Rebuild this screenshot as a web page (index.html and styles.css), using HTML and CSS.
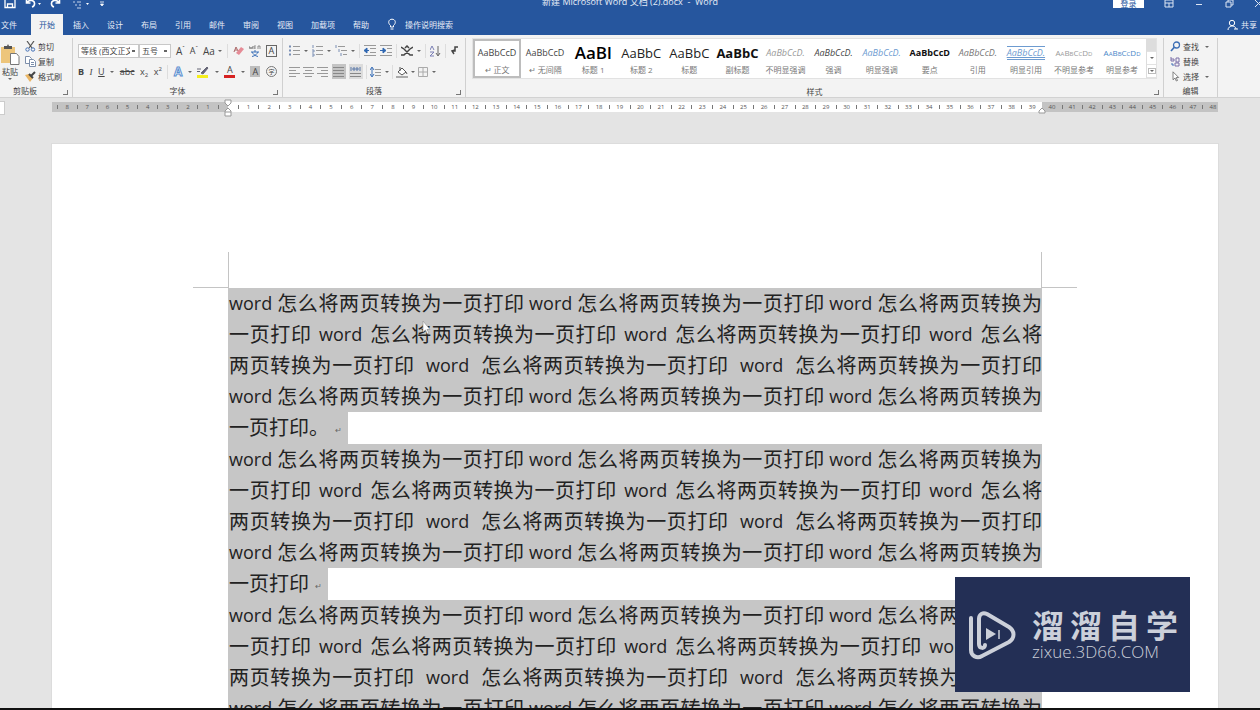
FILE: index.html
```html
<!DOCTYPE html>
<html lang="zh-CN">
<head>
<meta charset="utf-8">
<title>新建 Microsoft Word 文档 (2).docx - Word</title>
<link rel="stylesheet" href="styles.css">
</head>
<body>
<header class="top">
  <div class="titlebar">
    <div class="quick">
      <button aria-label="保存"><svg width="12" height="12" viewBox="0 0 12 12"><path d="M1 1h8l2 2v7.500H1z M3.500 10.500V7h5v3.500" fill="none" stroke="#fff" stroke-width="1.300"/></svg></button>
      <button aria-label="撤消"><svg width="16" height="12" viewBox="0 0 16 12"><path d="M1.500 2v4h4M2 6c2-4 8-3 7.500 1 0 1.500-1 2.500-2.500 3" fill="none" stroke="#fff" stroke-width="1.600"/><path d="M13 6h3l-1.500 2z" fill="#fff"/></svg></button>
      <button aria-label="恢复"><svg width="12" height="12" viewBox="0 0 12 12"><path d="M9.500 2v4h-4M9 6C7 2 1 3 1.500 7c0 1.500 1 2.500 2.500 3" fill="none" stroke="#fff" stroke-width="1.600"/></svg></button>
      <button aria-label="触摸模式"><svg width="18" height="12" viewBox="0 0 18 12"><path d="M2 5h2M6 5h4M4 8h2m2 0h2M6 11h4" stroke="#c4d2e9"/><path d="M15 6h3l-1.500 2z" fill="#fff"/></svg></button>
      <button aria-label="自定义快速访问工具栏"><svg width="8" height="12" viewBox="0 0 8 12"><path d="M2 5h4M2.500 7h3L4 9z" stroke="#fff" fill="#fff" stroke-width=".8"/></svg></button>
    </div>
    <div class="doc-name">新建 Microsoft Word 文档 (2).docx &nbsp;-&nbsp; Word</div>
    <div class="window">
      <button class="login">登录</button>
      <button aria-label="功能区显示选项"><svg width="10" height="10" viewBox="0 0 10 10"><path d="M1 1h8v7H1zM1 4h8M5 8V4" fill="none" stroke="#dce5f3"/></svg></button>
      <button aria-label="最小化"><svg width="10" height="10" viewBox="0 0 10 10"><path d="M2 5.500h6" stroke="#dce5f3"/></svg></button>
      <button aria-label="还原"><svg width="10" height="10" viewBox="0 0 10 10"><path d="M2 3h5v5H2zM4 3V1h5v5H7" fill="none" stroke="#dce5f3"/></svg></button>
      <button aria-label="关闭"><svg width="10" height="10" viewBox="0 0 10 10"><path d="M1 1l7 7M8 1L1 8" stroke="#dce5f3"/></svg></button>
    </div>
  </div>
  <nav class="tabs">
    <button class="file">文件</button><button class="on">开始</button><button>插入</button><button>设计</button><button>布局</button><button>引用</button><button>邮件</button><button>审阅</button><button>视图</button><button>加载项</button><button>帮助</button>
    <button class="tell"><svg width="10" height="13" viewBox="0 0 10 13"><path d="M3.500 9V7.500C.5 5 1.500 1.200 5 1.200S9.500 5 6.500 7.500V9zM3.500 11h3" fill="none" stroke="#fff"/></svg>操作说明搜索</button>
    <button class="share"><svg width="11" height="12" viewBox="0 0 11 12"><circle cx="5" cy="4" r="2.700" fill="none" stroke="#fff"/><path d="M1 11c0-5 8-5 8-1M7 10h4" fill="none" stroke="#fff"/></svg>共享</button>
  </nav>
</header>

<section class="ribbon">
  <div class="group clip">
    <div class="tools clip-tools">
      <button class="paste"><svg width="20" height="22" viewBox="0 0 20 22"><path d="M1 3h14v16H1z" fill="#edc57b"/><path d="M4 2h3l1-2 1 2h3v3H4z" fill="#555"/><path d="M10.500 9.500h6l2.500 3v8h-8.500z" fill="#fff" stroke="#777"/></svg>粘贴<i class="caret"></i></button>
      <div class="stack">
        <button><svg width="11" height="11" viewBox="0 0 11 11"><path d="M2 0l5 7M9 0L4 7" stroke="#555" stroke-width="1.200"/><circle cx="2.500" cy="8.500" r="1.700" fill="none" stroke="#4472b8"/><circle cx="8" cy="8.500" r="1.700" fill="none" stroke="#4472b8"/></svg>剪切</button>
        <button><svg width="11" height="11" viewBox="0 0 11 11"><path d="M.5 .5h4l2 2v5h-6z" fill="#fff" stroke="#7c8eaa"/><path d="M4.500 3.500h4l2 2v5h-6zM6 6.500h3M6 8.500h3" fill="#fff" stroke="#7c8eaa"/></svg>复制</button>
        <button><svg width="11" height="11" viewBox="0 0 11 11"><path d="M0 4l4-1 4 4-3 4z" fill="#e9b564"/><path d="M4 3l4 4M6 5l4-4" fill="none" stroke="#444" stroke-width="2"/></svg>格式刷</button>
      </div>
    </div>
    <div class="label">剪贴板</div>
  </div>

  <div class="group font">
    <div class="tools">
      <div class="row">
        <div class="combos">
          <select class="family" aria-label="字体"><option>等线 (西文正文)</option></select>
          <select class="size" aria-label="字号"><option>五号</option></select>
        </div>
        <button class="big">A<sup>ˆ</sup></button><button>A<sup>ˇ</sup></button>
        <button class="big">Aa<i class="caret"></i></button><i class="bar"></i>
        <button aria-label="清除格式"><svg width="11" height="12" viewBox="0 0 11 12"><path d="M3 8l5-6 3 2-5 6z" fill="#e58b96"/><path d="M1 7l2-5 2 4M2 5h2" fill="none" stroke="#a66"/></svg></button>
        <button aria-label="拼音指南"><svg width="12" height="12" viewBox="0 0 12 12"><path d="M0 1l1 3 1-2 1 2 1-3M5 3h2M5 4V1h2M9 4V1h2v3" fill="none" stroke="#777" stroke-width=".8"/><path d="M2 7h8M6 5v2M3 7c1 2 3 4 6 4.500M9 7c-1 2-3 4-6 4.500" fill="none" stroke="#3b70b8"/></svg></button>
        <button class="boxed">A</button>
      </div>
      <div class="row">
        <button><b>B</b></button><button><em class="serif">I</em></button><button><u>U</u></button><i class="caret"></i><button><s>abc</s></button><button>x<sub>2</sub></button><button>x<sup>2</sup></button><i class="bar"></i>
        <button class="fx">A</button><i class="caret"></i>
        <button aria-label="突出显示"><svg width="12" height="12" viewBox="0 0 12 12"><path d="M0 3h4M0 5.500h3M4 7l6-6 1 1-5 6z" stroke="#667" fill="#667"/><path d="M0 9h11v3H0z" fill="#f5ee1c"/></svg></button><i class="caret"></i>
        <button class="red">A</button><i class="caret"></i>
        <button class="shade">A</button><button class="circled">字</button>
      </div>
    </div>
    <div class="label">字体</div>
  </div>

  <div class="group para">
    <div class="tools">
      <div class="row">
        <button aria-label="项目符号"><svg width="11" height="12" viewBox="0 0 11 12"><path d="M4 1.500h7M4 5.500h7M4 9.500h7" stroke="#999"/><path d="M0 1.500h2M0 5.500h2M0 9.500h2" stroke="#7a8fb5" stroke-width="2"/></svg></button><i class="caret"></i>
        <button aria-label="编号"><svg width="11" height="12" viewBox="0 0 11 12"><path d="M4 1.500h7M4 5.500h7M4 9.500h7" stroke="#999"/><path d="M1 0v3M0 5h2v2H0M0 9h2v2H0" fill="none" stroke="#7a8fb5"/></svg></button><i class="caret"></i>
        <button aria-label="多级列表"><svg width="12" height="12" viewBox="0 0 12 12"><path d="M3 1.500h7M6 5.500h6M8 9.500h4" stroke="#999"/><path d="M1 0v3M4 4v3M6 8v3" stroke="#7a8fb5"/></svg></button><i class="caret"></i><i class="bar"></i>
        <button aria-label="减少缩进"><svg width="12" height="12" viewBox="0 0 12 12"><path d="M0 .5h12M6 3.500h6M6 7.500h6M0 10.500h12" stroke="#999"/><path d="M5 5.500H1M3 3L0 5.500 3 8z" fill="#2f67b1" stroke="#2f67b1"/></svg></button>
        <button aria-label="增加缩进"><svg width="12" height="12" viewBox="0 0 12 12"><path d="M0 .5h12M7 3.500h5M7 7.500h5M0 10.500h12" stroke="#999"/><path d="M0 5.500h4M3 3l3 2.500L3 8z" fill="#2f67b1" stroke="#2f67b1"/></svg></button><i class="bar"></i>
        <button aria-label="中文版式"><svg width="12" height="12" viewBox="0 0 12 12"><path d="M0 2l3 2 6 6h3M12 2L9 4l-6 6H0M4 3l2-2 2 2" fill="none" stroke="#444" stroke-width="1.500"/></svg></button><i class="caret"></i><i class="bar"></i>
        <button aria-label="排序"><svg width="11" height="12" viewBox="0 0 11 12"><path d="M0 5l2-4 2 4M0 7h4l-4 4h4" fill="none" stroke="#7a7fb5"/><path d="M8 1v9M6 8l2 3 2-3" fill="none" stroke="#666"/></svg></button><i class="bar"></i>
        <button aria-label="显示编辑标记"><svg width="9" height="12" viewBox="0 0 9 12"><path d="M8 2H5v4H2M5 5l-3 1 2 3" fill="none" stroke="#444" stroke-width="1.500"/></svg></button>
      </div>
      <div class="row">
        <button aria-label="左对齐"><svg width="11" height="12" viewBox="0 0 11 12"><path d="M0 1.500h11M0 4.500h7M0 7.500h11M0 10.500h7" stroke="#999"/></svg></button>
        <button aria-label="居中"><svg width="11" height="12" viewBox="0 0 11 12"><path d="M0 1.500h11M2 4.500h7M0 7.500h11M2 10.500h7" stroke="#999"/></svg></button>
        <button aria-label="右对齐"><svg width="11" height="12" viewBox="0 0 11 12"><path d="M0 1.500h11M4 4.500h7M0 7.500h11M4 10.500h7" stroke="#999"/></svg></button>
        <button class="pressed" aria-label="两端对齐"><svg width="11" height="12" viewBox="0 0 11 12"><path d="M0 1.500h11M0 4.500h11M0 7.500h11M0 10.500h11" stroke="#888"/></svg></button>
        <button class="dist" aria-label="分散对齐"><svg width="11" height="12" viewBox="0 0 11 12"><path d="M0 7.500h11M0 10.500h11" stroke="#888"/><path d="M1 1v4M10 1v4M2 3h7M4 1v4M7 1v4" stroke="#5a78a8"/></svg></button><i class="bar"></i>
        <button aria-label="行距"><svg width="11" height="12" viewBox="0 0 11 12"><path d="M5 3.500h6M5 6.500h6M5 9.500h6" stroke="#999"/><path d="M2 2v8M0 4l2-3 2 3M0 8l2 3 2-3" fill="none" stroke="#3b70b8"/></svg></button><i class="caret"></i><i class="bar"></i>
        <button aria-label="底纹"><svg width="12" height="12" viewBox="0 0 12 12"><path d="M2 6l4-4 4 4-4 3zM4 1v4M10 6l1 2" fill="#fff" stroke="#555"/><path d="M0 11h12" stroke="#aaa" stroke-width="2"/></svg></button><i class="caret"></i>
        <button aria-label="边框"><svg width="10" height="12" viewBox="0 0 10 12"><path d="M.5 1.500h9v9h-9zM5 1v10M0 6h10" fill="none" stroke="#aaa"/></svg></button><i class="caret"></i><span class="rest"></span>
      </div>
    </div>
    <div class="label">段落</div>
  </div>

  <div class="group styles">
    <div class="tools gallery">
      <button class="style picked"><span class="s0">AaBbCcD</span>↵ 正文</button>
      <button class="style"><span class="s0">AaBbCcD</span>↵ 无间隔</button>
      <button class="style"><span class="h1">AaBl</span>标题 1</button>
      <button class="style"><span class="h2">AaBbC</span>标题 2</button>
      <button class="style"><span class="h2">AaBbC</span>标题</button>
      <button class="style"><span class="h2 bold">AaBbC</span>副标题</button>
      <button class="style"><span class="s0 it soft">AaBbCcD.</span>不明显强调</button>
      <button class="style"><span class="s0 it">AaBbCcD.</span>强调</button>
      <button class="style"><span class="s0 it blue">AaBbCcD.</span>明显强调</button>
      <button class="style"><span class="s0 bold">AaBbCcD</span>要点</button>
      <button class="style"><span class="s0 it mid">AaBbCcD.</span>引用</button>
      <button class="style"><span class="s0 it blue lined">AaBbCcD.</span>明显引用</button>
      <button class="style"><span class="s0 caps soft">AaBbCcDd</span>不明显参考</button>
      <button class="style"><span class="s0 caps ref">AaBbCcDd</span>明显参考</button>
      <div class="scroll"><button class="off" aria-label="上一行"></button><button aria-label="下一行"><i class="caret"></i></button><button aria-label="其他"><i class="caret more"></i></button></div>
    </div>
    <div class="label">样式</div>
  </div>

  <div class="group edit">
    <div class="tools stack">
      <button><svg width="11" height="11" viewBox="0 0 11 11"><circle cx="6.500" cy="4" r="3" fill="none" stroke="#3e6fb5" stroke-width="1.300"/><path d="M4.500 6L1 10" stroke="#3e6fb5" stroke-width="1.600"/></svg>查找<i class="caret"></i></button>
      <button><svg width="11" height="11" viewBox="0 0 11 11"><path d="M1 1v4h3V3H1M6 2h3v4H6zM5 7h4v3H5z" fill="none" stroke="#7b6ea8"/><path d="M2 7v2h2" fill="none" stroke="#3e6fb5"/></svg>替换</button>
      <button><svg width="11" height="11" viewBox="0 0 11 11"><path d="M3 .8v8l2-1.800 1.300 3 1.200-.5-1.300-3h2.500z" fill="#fff" stroke="#666" stroke-width=".8"/></svg>选择<i class="caret"></i></button>
    </div>
    <div class="label">编辑</div>
  </div>
</section>

<main class="canvas">
  <div class="tab-stop"></div>
  <div class="ruler" aria-hidden="true">
    <div class="seg left"></div>
    <div class="seg mid-seg"></div>
    <div class="seg right"></div>
    <svg class="marker indent" width="8" height="18" viewBox="0 0 8 18"><path d="M1 1h6v3L4 7 1 4zM4 9l3 3v5H1v-5zM1 13h6" fill="#fff" stroke="#999"/></svg>
    <svg class="marker tail" width="8" height="18" viewBox="0 0 8 18"><path d="M4 9l3 3v2H1v-2z" fill="#fff" stroke="#999"/></svg>
  </div>
  <article class="page">
    <div class="corners"><i class="corner-l"></i><i class="corner-r"></i></div>
    <div class="text"></div>
  </article>
  <svg class="pointer" width="9" height="15" viewBox="0 0 9 15"><path d="M1 1v11l2.500-2 2 4 1.500-1-2-3.500H8z" fill="#fff" stroke="#999" stroke-width=".7"/></svg>
</main>

<aside class="brand">
  <svg width="48" height="50" viewBox="0 0 48 50"><path d="M3 8v32c0 6 6 9 11 6l27-14c6-4 6-11 0-15L19 4c-4-2-8 0-8 5v25c0 5 6 5 6 1" fill="none" stroke="#ccd0da" stroke-width="4" stroke-linecap="round" stroke-linejoin="round"/><path d="M18 18v12l10-6z" fill="#ccd0da"/><path d="M31 20v9" stroke="#ccd0da" stroke-width="1.500"/></svg>
  <div class="brand-text">
    <div class="brand-name"><span>溜</span><span>溜</span><span>自</span><span>学</span></div>
    <div class="brand-site">zixue.3D66.COM</div>
  </div>
</aside>
<footer class="edge"></footer>
<script src="main.js"></script>
</body>
</html>
```
FILE: styles.css
```css
* { box-sizing: border-box; }
body {
  margin: 0; height: 100vh; overflow: hidden; display: flex; flex-direction: column;
  position: relative; background: #e4e4e4; color: #444;
  font: 8px/12px "Open Sans", "Noto Sans CJK SC", sans-serif;
}
button {
  font: inherit; color: inherit; background: none; border: 0; padding: 0; margin: 0;
  display: inline-flex; align-items: center; justify-content: center; white-space: nowrap;
}
svg { display: block; flex: none; }

.top { background: #26569e; color: #e6edf7; flex: none; }
.titlebar { height: 14px; display: grid; grid-template-columns: 1fr auto 1fr; line-height: 4px; align-items: start; }
.quick { display: flex; gap: 9px; padding-left: 4px; height: 9px; align-items: flex-end; }
.doc-name { font-size: 9px; }
.window { display: flex; justify-content: flex-end; gap: 20px; height: 9px; align-items: flex-start; margin-right: -4px; }
.window button { height: 7px; }
.window .login { background: #fff; color: #26569e; width: 31px; height: 8px; }
.tabs { display: flex; gap: 2px; height: 21px; }
.tabs button { padding: 0 8px; }
.tabs .file { padding: 0 12px 0 1px; }
.tabs .on { background: #f3f3f3; color: #26569e; }
.tabs .tell { gap: 8px; }
.tabs .share { margin-left: auto; gap: 3px; padding: 0 3px; }

.ribbon { display: flex; flex: none; background: #f3f3f3; border-bottom: 1px solid #d2d2d2; padding: 3px 42px 0 0; height: 63px; }
.group { display: flex; flex-direction: column; border-right: 1px solid #d0d0d0; position: relative; flex: none; }
.tools { flex: 1; }
.label { text-align: center; line-height: 12px; }
.clip::after, .font::after, .para::after, .styles::after {
  content: ""; position: absolute; right: 4px; bottom: 2px; width: 4px; height: 4px;
  border-right: 1px solid #777; border-bottom: 1px solid #777;
}
.clip { width: 73px; }
.clip .label { padding-right: 22px; }
.clip-tools { display: flex; gap: 5px; }
.paste { flex-direction: column; width: 20px; }
.stack { display: flex; flex-direction: column; justify-content: center; align-items: flex-start; gap: 3px; }
.stack button { gap: 2px; height: 12px; }
.stack .caret { margin-left: 4px; }
.font { width: 210px; padding: 0 5px; }
.para { width: 183px; padding: 0 6px; }
.row { display: flex; align-items: center; justify-content: space-between; height: 21px; font-size: 9px; }
.font .row:first-child, .para .row:first-child { margin-top: 2px; }
.row .big { font-size: 10px; }
.rest { width: 20px; }
.caret { display: inline-block; border: 2px solid transparent; border-top-color: #666; border-bottom: 0; flex: none; }
.row button .caret { margin-left: 3px; }
.bar { width: 1px; height: 14px; background: #ddd; }
.serif { font-family: "Liberation Serif", serif; }
.row sup, .row sub { font-size: 6px; line-height: 6px; }
.row sup { align-self: flex-start; }
.row sub { align-self: flex-end; }
.combos { display: flex; }
select {
  appearance: none; font: 8px/12px "Open Sans", "Noto Sans CJK SC", sans-serif; color: #444;
  height: 14px; border: 1px solid #c8c8c8; border-radius: 0; padding: 0 8px 0 2px; margin: 0;
  background: #fff linear-gradient(#666, #666) no-repeat right 3px center / 3px 2px;
}
.family { width: 61px; }
.size { width: 32px; }
.boxed { border: 1px solid #666; width: 11px; height: 12px; }
.fx { color: #fff; font-weight: bold; font-size: 12px; -webkit-text-stroke: 1px #5b8fd0; }
.red { border-bottom: 3px solid #d62222; width: 11px; height: 12px; }
.shade { background: #bdbdbd; width: 10px; height: 11px; }
.circled { border: 1px solid #777; border-radius: 50%; width: 11px; height: 11px; font-size: 6px; }
.pressed, .dist { background: #c4c4c4; height: 15px; width: 14px; }
.dist { background: #dcdcdc; }

.styles { flex: 1; min-width: 0; padding: 0 6px; }
.gallery { display: flex; background: #fff; flex: none; height: 41px; margin-bottom: 7px; border: 1px solid #e2e2e2; }
.styles .label { flex: 1; }
.style { flex: 1 1 0; min-width: 0; flex-direction: column; color: #777; justify-content: flex-start; padding: 3px 3px 0; }
.style span { height: 22px; line-height: 22px; color: #444; }
.picked { outline: 2px solid #bdbdbd; outline-offset: -2px; }
.s0 { font-size: 9px; }
.style .h1 { font-size: 17px; font-weight: 600; color: #000; }
.style .h2 { font-size: 13px; color: #222; }
.style .bold { font-weight: bold; color: #111; }
.it { font-style: italic; }
.style .soft { color: #999; }
.style .mid { color: #777; }
.style .blue { color: #6d9bd0; }
.style .ref { color: #4a86c8; }
.style .lined { border: 1px solid #6d9bd0; border-width: 1px 0; height: 14px; line-height: 12px; margin: 4px 0; text-decoration: underline; }
.style .caps { font-variant: small-caps; font-size: 8px; }
.scroll { width: 10px; display: flex; flex-direction: column; border-left: 1px solid #ddd; flex: none; }
.scroll button { flex: 1; border-bottom: 1px solid #e2e2e2; }
.scroll .off { background: #ddd; }
.more { outline: 1px solid #bbb; outline-offset: 1px; }
.edit { width: 54px; padding-left: 6px; }
.edit .label { padding-right: 6px; }

.canvas { flex: 1; min-height: 0; position: relative; overflow: hidden; padding: 4px 42px 0 52px; }
.tab-stop { position: absolute; left: 0; top: 3px; width: 5px; height: 14px; background: #fff; border: 1px solid #ccc; border-left: 0; }
.ruler { display: flex; position: relative; height: 10px; margin-bottom: 32px; font-size: 6px; line-height: 10px; color: #555; }
.seg { display: flex; background: #c3c3c3; }
.seg span { flex: 1 1 0; min-width: 0; display: flex; justify-content: center; align-items: center; }
.tick::before { content: ""; width: 1px; height: 4px; background: #777; }
.left { width: 176px; padding-right: 5px; }
.mid-seg { flex: 1; background: #fff; padding: 0 5px; }
.right { width: 176px; padding-left: 5px; }
.marker { position: absolute; top: -3px; }
.indent { left: 172px; }
.tail { right: 172px; }

.page { background: #fff; padding: 108px 176px 0; box-shadow: 0 0 0 1px #dcdcdc; min-height: 100%; }
.corners { display: flex; justify-content: space-between; height: 36px; margin: 0 -35px; }
.corners i { width: 36px; border-bottom: 1px solid #c4c4c4; }
.corner-l { border-right: 1px solid #c4c4c4; }
.corner-r { border-left: 1px solid #c4c4c4; }
.text { font-size: 20px; line-height: 31px; color: #222; }
.text p { margin: 0; padding-bottom: 1px; }
.line { display: flex; background: #c6c6c6; height: 31px; padding-left: 1px; white-space: nowrap; }
.tight { gap: 5px; }
.medium { gap: 8px; }
.loose { gap: 12px; }
.latin { font-size: 18px; flex: none; }
.han { flex: 1 1 0; min-width: 0; text-align: justify; text-align-last: justify; }
.n4 { flex-grow: 4; }
.n3 { flex-grow: 3; }
.n8 { flex-grow: 8; }
.n9 { flex-grow: 9; }
.n12 { flex-grow: 12; }
.last { width: max-content; height: 32px; margin-bottom: -1px; }
.return { font-size: 8px; width: 19px; padding-top: 2px; text-align: center; color: #666; }
.pointer { position: absolute; left: 422px; top: 222px; }

.brand {
  position: absolute; right: 70px; bottom: 18px; width: 235px; height: 115px; background: #232f55; color: #ccd0da;
  display: flex; align-items: center; gap: 16px; padding: 0 12px 0 13px;
}
.brand-text { flex: 1; }
.brand-name { display: flex; justify-content: space-between; font: bold 32px/32px "Noto Sans CJK SC", sans-serif; padding-bottom: 2px; }
.brand-site { font: 300 17px/20px "Open Sans", "DejaVu Sans", sans-serif; white-space: nowrap; }
.edge { height: 2px; background: #111; flex: none; position: relative; }
```
FILE: main.js
```js
// Ruler: numbers alternate with half-unit ticks.
function fill(selector, items) {
  const seg = document.querySelector(selector);
  items.forEach(function (item) {
    const cell = document.createElement("span");
    if (item === "|") cell.className = "tick";
    else cell.textContent = item;
    seg.appendChild(cell);
  });
}
const left = ["|"], mid = [], right = [];
for (let n = 8; n >= 1; n--) left.push(n, "|");
for (let n = 1; n <= 39; n++) mid.push("|", n);
for (let n = 40; n <= 48; n++) { right.push(n); if (n < 48) right.push("|"); }
fill(".left", left);
fill(".mid-seg", mid);
fill(".right", right);

// Document body: three paragraphs of justified lines.
const phrase = "怎么将两页转换为一页打印";
const body = [
  ["tight", "word", phrase, "word", phrase, "word", "怎么将两页转换为"],
  ["medium", "一页打印", "word", phrase, "word", phrase, "word", "怎么将"],
  ["loose", "两页转换为一页打印", "word", phrase, "word", phrase],
  ["tight", "word", phrase, "word", phrase, "word", "怎么将两页转换为"]
];
const text = document.querySelector(".text");
["一页打印。", "一页打印", "一页打印"].forEach(function (ending) {
  const p = document.createElement("p");
  body.forEach(function (parts) {
    const line = document.createElement("span");
    line.className = "line " + parts[0];
    parts.slice(1).forEach(function (part) {
      const run = document.createElement("span");
      run.className = part === "word" ? "latin" : "han n" + part.length;
      run.textContent = part;
      line.appendChild(run);
    });
    p.appendChild(line);
  });
  const last = document.createElement("span");
  last.className = "line last";
  last.append(ending);
  const mark = document.createElement("span");
  mark.className = "return";
  mark.textContent = "↵";
  last.appendChild(mark);
  p.appendChild(last);
  text.appendChild(p);
});
```
